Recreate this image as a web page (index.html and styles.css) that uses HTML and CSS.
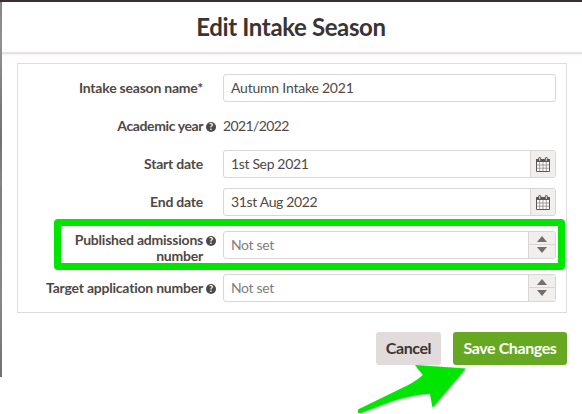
FILE: index.html
```html
<!DOCTYPE html>
<html lang="en">
<head>
    <meta charset="UTF-8">
    <meta name="viewport" content="width=device-width, initial-scale=1.0">
    <title>Edit Intake Season</title>
    <link rel="stylesheet" href="styles.css">
</head>
<body>
    <!-- Modal -->
    <div class="page">
        <div class="modal">
            <header class="modal-header">
                <h1>Edit Intake Season</h1>
            </header>

            <form class="fields">
                <div class="row">
                    <label class="label">Intake season name*</label>
                    <span class="help"></span>
                    <div class="control"><span class="value">Autumn Intake 2021</span></div>
                </div>
                <div class="row">
                    <label class="label year">Academic year</label>
                    <span class="help"><span class="help-icon">?</span></span>
                    <span class="plain">2021/2022</span>
                </div>
                <div class="row">
                    <label class="label">Start date</label>
                    <span class="help"></span>
                    <div class="control">
                        <span class="value date">1st Sep 2021</span>
                        <span class="addon">
                            <svg width="14" height="15" viewBox="0 0 14 15">
                                <path class="cal-body" d="M.5 2.5h13v12H.5z"/>
                                <path class="cal-top" d="M0 2h14v3H0z"/>
                                <path class="cal-grid" d="M1 8h12M1 11.2h12M3.7 5v9M7 5v9M10.3 5v9"/>
                                <path class="cal-ring" d="M3.7 1.5v2M10.3 1.5v2"/>
                                <path class="cal-pin" d="M3.7 1.5v2M10.3 1.5v2"/>
                            </svg>
                        </span>
                    </div>
                </div>
                <div class="row">
                    <label class="label">End date</label>
                    <span class="help"></span>
                    <div class="control">
                        <span class="value date">31st Aug 2022</span>
                        <span class="addon">
                            <svg width="14" height="15" viewBox="0 0 14 15">
                                <path class="cal-body" d="M.5 2.5h13v12H.5z"/>
                                <path class="cal-top" d="M0 2h14v3H0z"/>
                                <path class="cal-grid" d="M1 8h12M1 11.2h12M3.7 5v9M7 5v9M10.3 5v9"/>
                                <path class="cal-ring" d="M3.7 1.5v2M10.3 1.5v2"/>
                                <path class="cal-pin" d="M3.7 1.5v2M10.3 1.5v2"/>
                            </svg>
                        </span>
                    </div>
                </div>
                <div class="row tall">
                    <div class="label published">
                        <div>Published admissions</div>
                        <div>number</div>
                    </div>
                    <span class="help top"><span class="help-icon">?</span></span>
                    <div class="control">
                        <span class="value empty">Not set</span>
                        <span class="spinner"><i class="up"></i><i class="down"></i></span>
                    </div>
                    <div class="highlight"></div>
                </div>
                <div class="row">
                    <label class="label">Target application number</label>
                    <span class="help"><span class="help-icon">?</span></span>
                    <div class="control">
                        <span class="value empty">Not set</span>
                        <span class="spinner"><i class="up"></i><i class="down"></i></span>
                    </div>
                </div>
            </form>

            <div class="actions">
                <button type="button" class="btn cancel">Cancel</button>
                <button type="button" class="btn save">Save Changes</button>
            </div>
        </div>
    </div>

    <!-- Arrow pointing at the save button -->
    <svg class="arrow" width="120" height="56" viewBox="0 0 120 56">
        <path d="M2 54 Q1 52 3 51 L42 32 Q58 25 67 17 L59 7 L109.500 10.500 L76.500 49.500 L74 35.500 Q58 36 36 43 L4 55 Q2.500 55.500 2 54Z"/>
    </svg>
</body>
</html>
```
FILE: styles.css
```css
* {
    margin: 0;
    padding: 0;
    box-sizing: border-box;
}
body {
    height: 414px;
    overflow: hidden;
    background: #fff;
    color: #4f4845;
    font-family: Lato, "Open Sans", sans-serif;
    font-size: 14px;
    letter-spacing: -0.22px;
}
.page {
    height: 377px;
    padding: 2px 0 0 2px;
    background: linear-gradient(#3a3030 2px, #8b8786 2px, #969292 44px, #858180 83px, #757170 140px, #85857d 185px, #827e7d 186px, #8a8685 300px, #757170);
}
.modal {
    height: 375px;
    background: #fff;
}
.modal-header {
    display: flex;
    justify-content: center;
    align-items: center;
    height: 52px;
    padding-right: 2px;
    border-bottom: 2px solid #e8e1e1;
    box-shadow: 0 1px 2px rgba(0, 0, 0, 0.06);
}
.modal-header h1 {
    color: #3a3433;
    font-size: 24px;
    font-weight: bold;
    line-height: 30px;
    letter-spacing: -0.38px;
    white-space: nowrap;
}
.fields {
    display: flex;
    flex-direction: column;
    gap: 10px;
    width: 550px;
    height: 250px;
    margin: 9px 0 0 15px;
    padding: 10px 10px 10px 0;
    border: 1px solid #e0dcdc;
}
.row {
    display: flex;
    align-items: center;
    position: relative;
    height: 28px;
}
.row.tall {
    height: 38px;
}
.label {
    width: 185px;
    font-weight: bold;
    line-height: 16px;
    text-align: right;
    white-space: nowrap;
}
.year {
    letter-spacing: -0.4px;
}
.published {
    padding-top: 6px;
}
.help {
    display: flex;
    width: 20px;
    padding: 2px 0 0 3px;
}
.help.top {
    align-self: flex-start;
    padding-top: 10px;
}
.help-icon {
    width: 10px;
    height: 10px;
    border-radius: 50%;
    background: #4f4845;
    color: #fff;
    font-size: 9px;
    font-weight: 900;
    line-height: 10px;
    text-align: center;
}
.control {
    display: flex;
    width: 333px;
    height: 28px;
    border: 1px solid #d9d6d5;
    border-radius: 3px;
    overflow: hidden;
}
.value {
    flex: 1;
    padding-left: 7px;
    line-height: 26px;
    white-space: nowrap;
}
.date {
    letter-spacing: -0.35px;
}
.plain {
    line-height: 26px;
    letter-spacing: -0.6px;
}
.empty {
    color: #827d7b;
    letter-spacing: -0.35px;
}
.addon {
    display: flex;
    justify-content: center;
    align-items: center;
    width: 25px;
    border-left: 1px solid #d9d6d5;
    background: #f1efee;
}
.cal-body {
    fill: #fff;
    stroke: #5d5654;
}
.cal-top {
    fill: #5d5654;
}
.cal-grid {
    fill: none;
    stroke: #8e8886;
    stroke-width: 0.8;
}
.cal-ring {
    fill: none;
    stroke: #5d5654;
    stroke-width: 3;
    stroke-linecap: round;
}
.cal-pin {
    fill: none;
    stroke: #eee;
    stroke-width: 1;
    stroke-linecap: round;
}
.spinner {
    display: flex;
    flex-direction: column;
    justify-content: space-between;
    align-items: center;
    width: 27px;
    padding: 4px 0 5px;
    border-left: 1px solid #d9d6d5;
    background: linear-gradient(#f1efee 12px, #d9d6d5 12px, #d9d6d5 13px, #f1efee 13px);
}
.up,
.down {
    border-left: 5px solid transparent;
    border-right: 5px solid transparent;
}
.up {
    border-bottom: 6px solid #756d69;
}
.down {
    border-top: 6px solid #756d69;
}
.highlight {
    position: absolute;
    left: 36px;
    top: -7px;
    width: 511px;
    height: 51px;
    border: 7px solid #00e600;
    border-radius: 4px;
}
.actions {
    display: flex;
    justify-content: flex-end;
    gap: 12px;
    padding: 19px 15px 0 0;
}
.btn {
    height: 33px;
    padding-bottom: 2px;
    border: none;
    border-radius: 3px;
    font-family: inherit;
    font-size: 16px;
    font-weight: bold;
    letter-spacing: -0.42px;
    white-space: nowrap;
}
.cancel {
    width: 65px;
    background: #e1dcdb;
    color: #3a3433;
}
.save {
    width: 114px;
    background: #67a822;
    color: #fff;
}
.arrow {
    position: absolute;
    left: 356px;
    top: 358px;
    fill: #00e600;
    filter: drop-shadow(1px 1px 1px rgba(0, 0, 0, 0.4));
}
```
